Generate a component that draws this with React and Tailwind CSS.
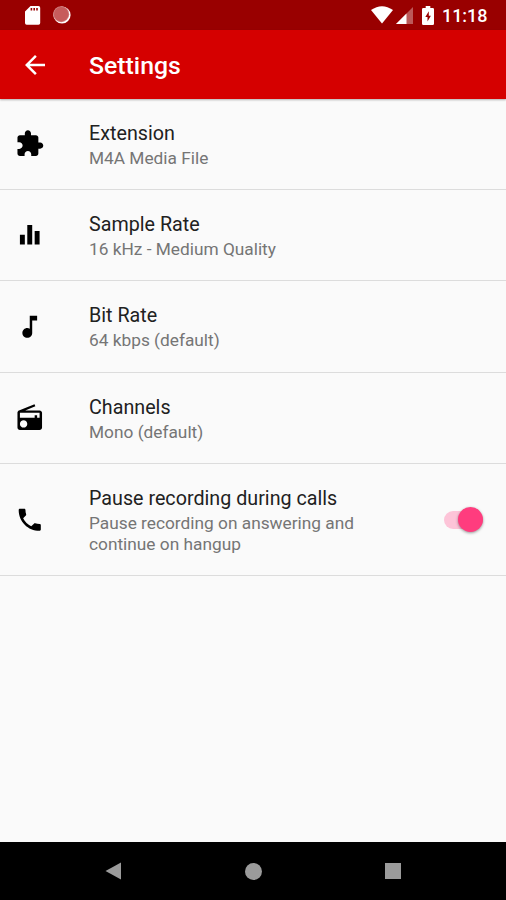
const icons = {
  extension: (
    <path d="M20.5 11H19V7c0-1.1-.9-2-2-2h-4V3.5C13 2.12 11.88 1 10.5 1S8 2.12 8 3.5V5H4c-1.1 0-1.99.9-1.99 2v3.8H3.5c1.49 0 2.7 1.21 2.7 2.7s-1.21 2.7-2.7 2.7H2V20c0 1.1.9 2 2 2h3.8v-1.5c0-1.49 1.21-2.7 2.7-2.7 1.49 0 2.7 1.21 2.7 2.7V22H17c1.1 0 2-.9 2-2v-4h1.500c1.38 0 2.5-1.12 2.500-2.500S21.880 11 20.500 11z" />
  ),
  bars: <path d="M10 20h4V4h-4v16zm-6 0h4v-8H4v8zM16 9v11h4V9h-4z" />,
  note: (
    <path d="M12 3v10.550c-.59-.34-1.270-.55-2-.55-2.210 0-4 1.790-4 4s1.790 4 4 4 4-1.790 4-4V7h4V3h-6z" />
  ),
  radio: (
    <path d="M3.240 6.150C2.510 6.430 2 7.170 2 8v12c0 1.100.89 2 2 2h16c1.110 0 2-.9 2-2V8c0-1.110-.89-2-2-2H8.300l8.260-3.340L15.880 1 3.240 6.150zM7 20c-1.660 0-3-1.340-3-3s1.340-3 3-3 3 1.340 3 3-1.340 3-3 3zm13-8h-2v-2h-2v2H4V8h16v4z" />
  ),
  phone: (
    <path d="M6.620 10.790c1.440 2.830 3.760 5.140 6.590 6.590l2.200-2.200c.27-.27.67-.36 1.020-.24 1.120.37 2.330.57 3.570.57.55 0 1 .45 1 1V20c0 .55-.45 1-1 1-9.390 0-17-7.610-17-17 0-.55.45-1 1-1h3.500c.55 0 1 .45 1 1 0 1.250.2 2.450.57 3.570.11.35.03.74-.25 1.020l-2.200 2.200z" />
  ),
};

const rows = [
  { icon: "extension", title: "Extension", lines: ["M4A Media File"], height: "h-[91px]" },
  { icon: "bars", title: "Sample Rate", lines: ["16 kHz - Medium Quality"], height: "h-[91px]" },
  { icon: "note", title: "Bit Rate", lines: ["64 kbps (default)"], height: "h-[92px]" },
  { icon: "radio", title: "Channels", lines: ["Mono (default)"], height: "h-[91px]" },
  {
    icon: "phone",
    title: "Pause recording during calls",
    lines: ["Pause recording on answering and", "continue on hangup"],
    height: "h-[112px]",
    toggle: true,
  },
];

function StatusBar() {
  return (
    <div className="flex h-[30px] shrink-0 items-center bg-[#990000] pl-[25px] pr-[19px]">
      <svg width="16" height="19" viewBox="0 0 16 19" fill="#fff">
        <path fillRule="evenodd" d="M5.500 0H13.500Q15.200 0 15.200 1.700V17Q15.200 18.700 13.500 18.700H1.700Q0 18.700 0 17V5.500ZM5.600 2V4.600H7.200V2ZM8.400 2V4.600H10V2ZM11.200 2V4.600H12.800V2Z" />
      </svg>
      <svg className="ml-[12px]" width="18" height="18" viewBox="0 0 18 18">
        <circle cx="9" cy="9" r="8.600" fill="#fff" />
        <circle cx="8.200" cy="8.200" r="8" fill="#d08080" />
        <circle cx="8.200" cy="8.200" r="7.200" fill="#c75c5c" />
      </svg>
      <div className="flex-1" />
      <svg width="22" height="18" viewBox="0 0 22 18" fill="#fff">
        <path d="M11 17.500 0 4Q11-3.600 22 4Z" />
      </svg>
      <svg className="ml-[3px] mt-[1px]" width="17" height="17" viewBox="0 0 17 17" fill="#fff">
        <path d="M17 0V17H0Z" fillOpacity=".35" />
        <path d="M10.500 6.500V17H0Z" />
      </svg>
      <svg className="ml-[9px]" width="12" height="19" viewBox="0 0 12 19">
        <path d="M3.700 0H8.300V2H10.700Q12 2 12 3.300V17.700Q12 19 10.700 19H1.300Q0 19 0 17.700V3.300Q0 2 1.300 2H3.700Z" fill="#fff" />
        <path d="M6.800 5.200 3.300 11H5.500V15.600L8.900 9.700H6.800Z" fill="#990000" />
      </svg>
      <span className="ml-[8px] mt-[2px] w-[45px] whitespace-nowrap text-[18px] font-medium leading-5 tracking-[-0.05px] text-white">
        11:18
      </span>
    </div>
  );
}

function Switch() {
  return (
    <div className="mr-[22px] flex h-[27px] w-[41px] items-center rounded-full">
      <div className="ml-[1px] flex h-[18px] w-[39px] items-center justify-end rounded-full bg-[#fdc4d8]">
        <div className="h-[25px] w-[25px] shrink-0 rounded-full bg-[#ff3c7e] shadow-[0_1px_3px_rgba(0,0,0,0.4)]" />
      </div>
    </div>
  );
}

function Row({ icon, title, lines, height, toggle }) {
  return (
    <div className={`flex shrink-0 items-center border-b border-[#dcdcdc] ${height}`}>
      <svg className="ml-[15px] shrink-0" width="29.500" height="29.500" viewBox="0 0 24 24" fill="#000">
        {icons[icon]}
      </svg>
      <div className="ml-[44.500px] mt-[2px] flex-1 whitespace-nowrap">
        <div className="mb-[2px] text-[19.700px] leading-[24px] tracking-[0.01px] text-[#212121]">{title}</div>
        {lines.map((line) => (
          <div key={line} className="text-[17.300px] leading-[20.500px] text-[#757575]">
            {line}
          </div>
        ))}
      </div>
      {toggle && <Switch />}
    </div>
  );
}

export default function App() {
  return (
    <div className="flex h-[900px] w-[506px] flex-col overflow-hidden bg-[#fafafa] font-[Roboto,sans-serif]">
      <StatusBar />
      <header className="flex h-[69px] shrink-0 items-center bg-[#d50000] shadow-[0_1px_2px_rgba(0,0,0,0.3)]">
        <svg className="ml-[20px]" width="30" height="30" viewBox="0 0 24 24" fill="#fff">
          <path d="M20 11H7.830l5.590-5.590L12 4l-8 8 8 8 1.410-1.410L7.830 13H20v-2z" />
        </svg>
        <h1 className="ml-[39px] mt-[2px] text-[24.800px] font-medium leading-8 text-white">Settings</h1>
      </header>
      <main className="flex flex-1 flex-col">
        {rows.map((row) => (
          <Row key={row.title} {...row} />
        ))}
      </main>
      <nav className="flex h-[58px] shrink-0 items-center justify-between bg-black pl-[105px] pr-[105px]">
        <svg width="17" height="18" viewBox="0 0 17 18" fill="#9b9b9b">
          <path d="M16 .5V17.500L.5 9Z" />
        </svg>
        <div className="h-[17px] w-[17px] rounded-full bg-[#9b9b9b]" />
        <div className="h-[16px] w-[16px] bg-[#9b9b9b]" />
      </nav>
    </div>
  );
}
